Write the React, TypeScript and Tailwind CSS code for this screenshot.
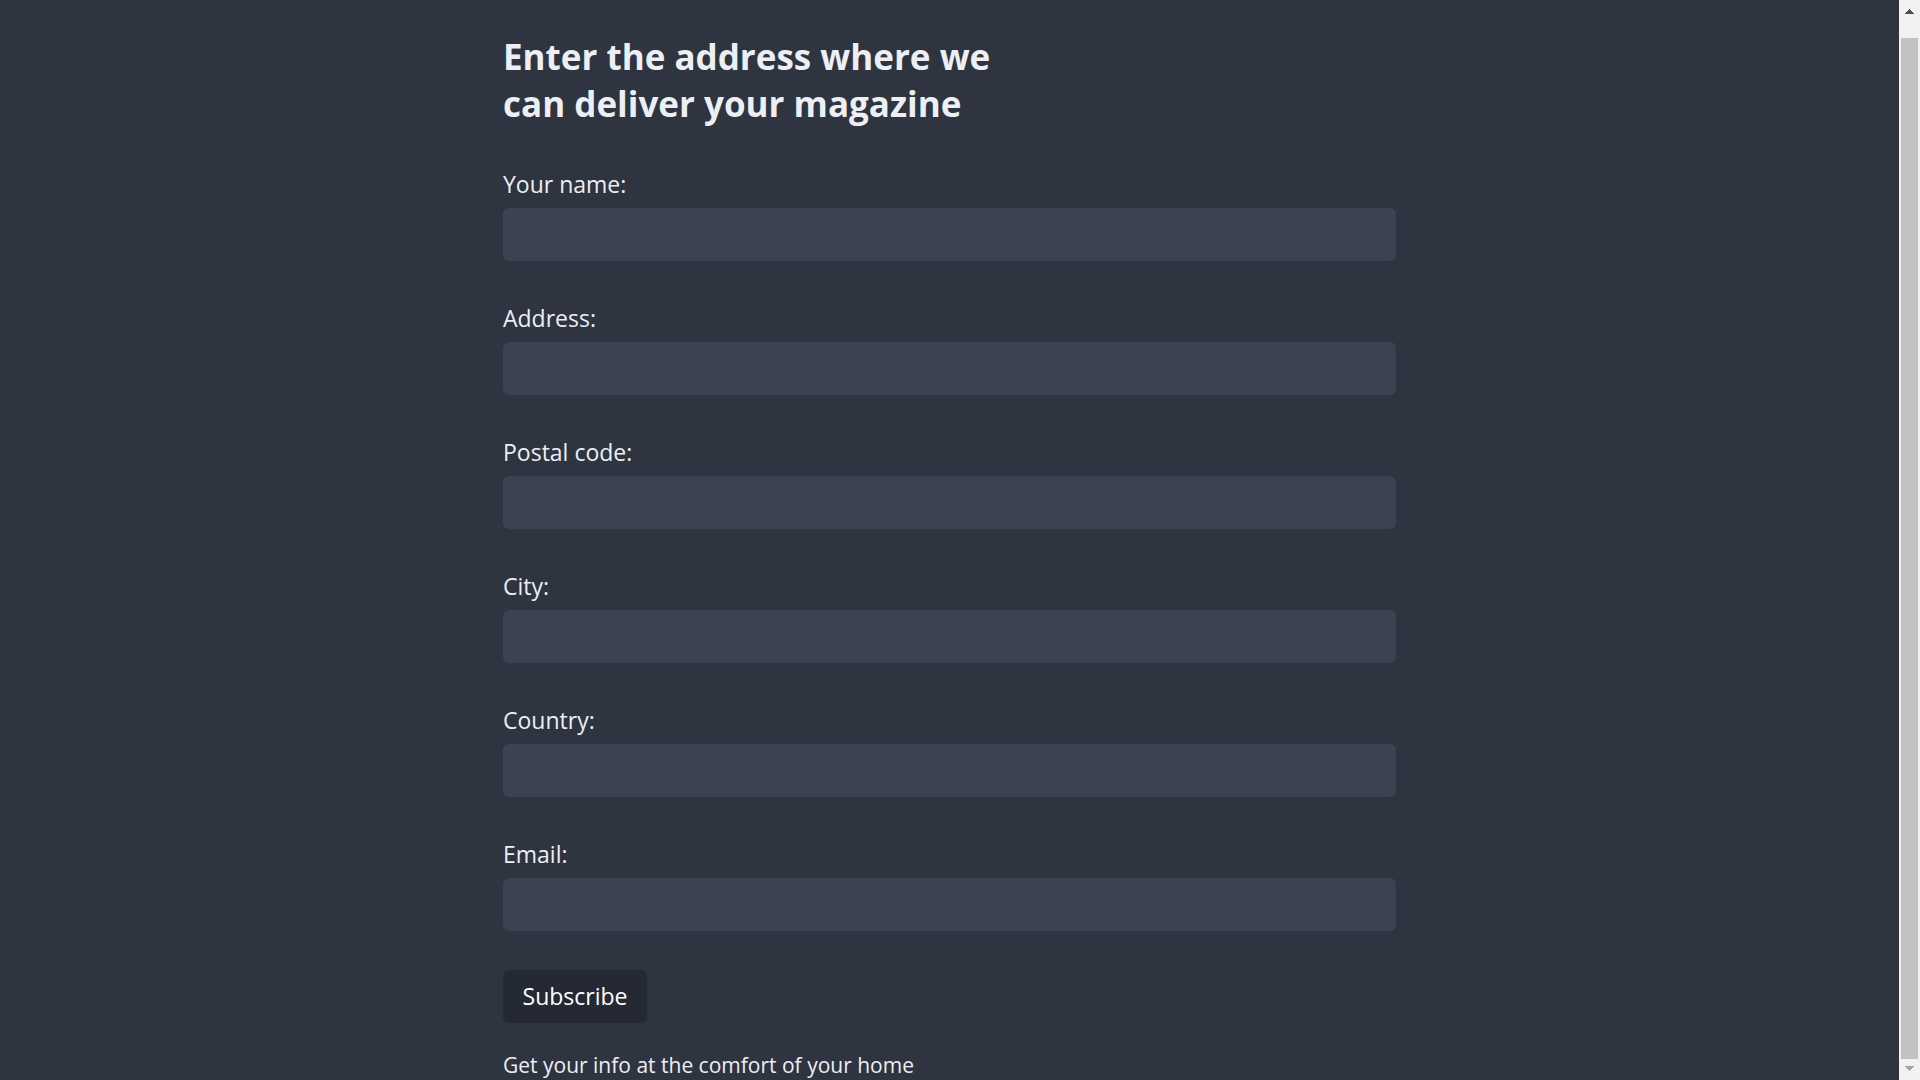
const fields = [
  { id: "name", label: "Your name:", type: "text" },
  { id: "address", label: "Address:", type: "text" },
  { id: "postal-code", label: "Postal code:", type: "text" },
  { id: "city", label: "City:", type: "text" },
  { id: "country", label: "Country:", type: "text" },
  { id: "email", label: "Email:", type: "email" },
];

function Field({ id, label, type }: { id: string; label: string; type: string }) {
  return (
    <div className="flex flex-col">
      <label htmlFor={id} className="mb-1 text-[23px] leading-10">
        {label}
      </label>
      <input
        id={id}
        name={id}
        type={type}
        className="h-[53px] w-full rounded-md bg-[#3c4251] px-4 text-[23px] outline-none"
      />
    </div>
  );
}

function ScrollRail() {
  return (
    <div className="flex w-[21px] shrink-0 flex-col items-center bg-[#f1f1f1]" aria-hidden="true">
      <div className="flex h-[38px] w-full justify-center pt-[9px]">
        <svg width="9" height="5" viewBox="0 0 9 5" shapeRendering="crispEdges">
          <path d="M4 0h1v1h1v1h1v1h1v1h1v1H0V4h1V3h1V2h1V1h1z" fill="#505050" />
        </svg>
      </div>
      <div className="w-[17px] grow bg-[#c1c1c1]" />
      <div className="flex h-[21px] w-full justify-center pt-[7px]">
        <svg width="9" height="5" viewBox="0 0 9 5" shapeRendering="crispEdges">
          <path d="M0 0h9v1H8v1H7v1H6v1H5v1H4V4H3V3H2V2H1V1H0z" fill="#a3a3a3" />
        </svg>
      </div>
    </div>
  );
}

export default function App() {
  return (
    <div className="flex h-screen overflow-hidden bg-[#2e3440] font-['Open_Sans','Noto_Sans',sans-serif] text-[#eceff4]">
      <main className="min-w-0 grow overflow-hidden px-6 pt-[33px]">
        <form className="mx-auto flex max-w-[893px] flex-col items-stretch" onSubmit={(e) => e.preventDefault()}>
          <h1 className="mb-[37px] text-[35px] leading-[47px] font-bold">
            Enter the address where we
            <br />
            can deliver your magazine
          </h1>
          <div className="flex flex-col gap-[37px]">
            {fields.map((f) => (
              <Field key={f.id} {...f} />
            ))}
          </div>
          <button
            type="submit"
            className="mt-[39px] h-[53px] w-36 self-start rounded-md bg-[#242933] text-[23px] text-white"
          >
            Subscribe
          </button>
          <p className="mt-6 text-[21px] leading-9">Get your info at the comfort of your home</p>
        </form>
      </main>
      <ScrollRail />
    </div>
  );
}
